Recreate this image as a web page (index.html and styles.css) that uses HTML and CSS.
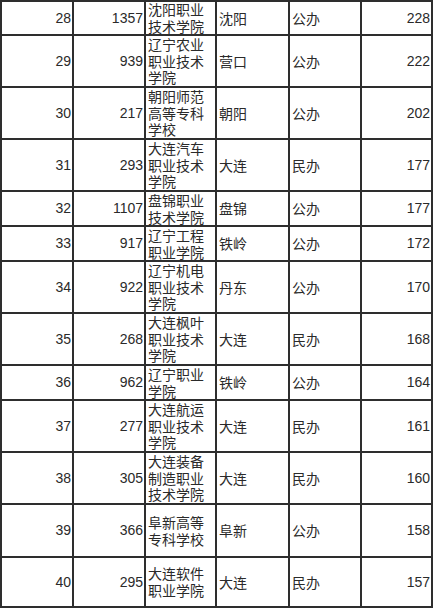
FILE: index.html
```html
<!DOCTYPE html>
<html lang="zh-CN">
<head>
<meta charset="utf-8">
<title>排名</title>
<link rel="stylesheet" href="styles.css">
</head>
<body>
<div class="ranking">
  <div class="row"><div class="cell num">28</div><div class="cell num">1357</div><div class="cell txt">沈阳职业技术学院</div><div class="cell txt">沈阳</div><div class="cell txt">公办</div><div class="cell num">228</div></div>
  <div class="row"><div class="cell num">29</div><div class="cell num">939</div><div class="cell txt">辽宁农业职业技术学院</div><div class="cell txt">营口</div><div class="cell txt">公办</div><div class="cell num">222</div></div>
  <div class="row"><div class="cell num">30</div><div class="cell num">217</div><div class="cell txt">朝阳师范高等专科学校</div><div class="cell txt">朝阳</div><div class="cell txt">公办</div><div class="cell num">202</div></div>
  <div class="row"><div class="cell num">31</div><div class="cell num">293</div><div class="cell txt">大连汽车职业技术学院</div><div class="cell txt">大连</div><div class="cell txt">民办</div><div class="cell num">177</div></div>
  <div class="row"><div class="cell num">32</div><div class="cell num">1107</div><div class="cell txt">盘锦职业技术学院</div><div class="cell txt">盘锦</div><div class="cell txt">公办</div><div class="cell num">177</div></div>
  <div class="row"><div class="cell num">33</div><div class="cell num">917</div><div class="cell txt">辽宁工程职业学院</div><div class="cell txt">铁岭</div><div class="cell txt">公办</div><div class="cell num">172</div></div>
  <div class="row"><div class="cell num">34</div><div class="cell num">922</div><div class="cell txt">辽宁机电职业技术学院</div><div class="cell txt">丹东</div><div class="cell txt">公办</div><div class="cell num">170</div></div>
  <div class="row"><div class="cell num">35</div><div class="cell num">268</div><div class="cell txt">大连枫叶职业技术学院</div><div class="cell txt">大连</div><div class="cell txt">民办</div><div class="cell num">168</div></div>
  <div class="row"><div class="cell num">36</div><div class="cell num">962</div><div class="cell txt">辽宁职业学院</div><div class="cell txt">铁岭</div><div class="cell txt">公办</div><div class="cell num">164</div></div>
  <div class="row"><div class="cell num">37</div><div class="cell num">277</div><div class="cell txt">大连航运职业技术学院</div><div class="cell txt">大连</div><div class="cell txt">民办</div><div class="cell num">161</div></div>
  <div class="row"><div class="cell num">38</div><div class="cell num">305</div><div class="cell txt">大连装备制造职业技术学院</div><div class="cell txt">大连</div><div class="cell txt">民办</div><div class="cell num">160</div></div>
  <div class="row"><div class="cell num">39</div><div class="cell num">366</div><div class="cell txt">阜新高等专科学校</div><div class="cell txt">阜新</div><div class="cell txt">公办</div><div class="cell num">158</div></div>
  <div class="row"><div class="cell num">40</div><div class="cell num">295</div><div class="cell txt">大连软件职业学院</div><div class="cell txt">大连</div><div class="cell txt">民办</div><div class="cell num">157</div></div>
</div>
</body>
</html>
```
FILE: styles.css
```css
html, body {
  margin: 0;
  padding: 0;
  background: #fff;
}

.ranking {
  width: 433px;
  box-sizing: border-box;
  display: grid;
  grid-template-columns: 70px 70px 69px 71px 70px 69px;
  grid-template-rows: 32px 50px 50px 50px 33px 33px 50px 50px 33px 50px 50px 51px 48px;
  gap: 2px;
  padding: 2px;
  background: #2e2e2e;
  font-family: "Liberation Sans", "Noto Sans CJK SC", sans-serif;
  font-size: 14px;
  line-height: 16.6px;
  color: #2a2a2a;
}

.row {
  display: contents;
}

.cell {
  background: #fff;
  display: flex;
  align-items: center;
  min-width: 0;
}

.num {
  justify-content: flex-end;
  padding-right: 1px;
}

.txt {
  padding-left: 2px;
  font-family: "Noto Sans CJK SC", sans-serif;
}
```
